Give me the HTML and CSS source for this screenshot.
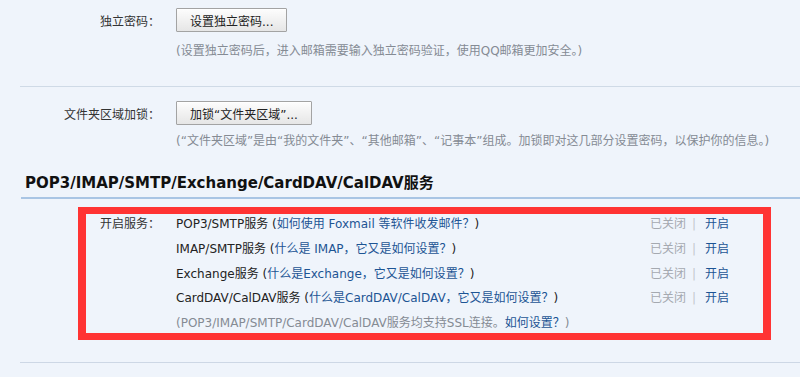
FILE: index.html
```html
<!DOCTYPE html>
<html lang="zh-CN">
<head>
<meta charset="utf-8">
<link rel="stylesheet" href="styles.css">
</head>
<body>
<div class="section s1">
  <div class="field">
    <div class="label">独立密码：</div>
    <button class="btn">设置独立密码...</button>
  </div>
  <p class="desc d1">(设置独立密码后，进入邮箱需要输入独立密码验证，使用QQ邮箱更加安全。)</p>
</div>
<div class="sep"></div>
<div class="section s2">
  <div class="field">
    <div class="label">文件夹区域加锁：</div>
    <button class="btn">加锁“文件夹区域”...</button>
  </div>
  <p class="desc d2">(“文件夹区域”是由“我的文件夹”、“其他邮箱”、“记事本”组成。加锁即对这几部分设置密码，以保护你的信息。)</p>
</div>
<h2 class="heading">POP3/IMAP/SMTP/Exchange/CardDAV/CalDAV服务</h2>
<div class="services">
  <div class="svc-label">开启服务：</div>
  <div class="svc-name">POP3/SMTP服务 (<a class="link">如何使用 Foxmail 等软件收发邮件？</a>)</div>
  <div class="status"><span class="off">已关闭</span><span class="bar">|</span><a class="link">开启</a></div>

  <div class="svc-name col2">IMAP/SMTP服务 (<a class="link">什么是 IMAP，它又是如何设置？</a>)</div>
  <div class="status"><span class="off">已关闭</span><span class="bar">|</span><a class="link">开启</a></div>

  <div class="svc-name col2">Exchange服务 (<a class="link">什么是Exchange，它又是如何设置？</a>)</div>
  <div class="status"><span class="off">已关闭</span><span class="bar">|</span><a class="link">开启</a></div>

  <div class="svc-name col2">CardDAV/CalDAV服务 (<a class="link">什么是CardDAV/CalDAV，它又是如何设置？</a>)</div>
  <div class="status"><span class="off">已关闭</span><span class="bar">|</span><a class="link">开启</a></div>

  <div class="note">(POP3/IMAP/SMTP/CardDAV/CalDAV服务均支持SSL连接。<a class="link">如何设置？</a>)</div>
</div>
<div class="sep bottom"></div>
</body>
</html>
```

FILE: styles.css
```css
html, body {
  margin: 0;
  padding: 0;
}
body {
  background: #eff4fb;
  font-family: "DejaVu Sans", "Noto Sans CJK SC", sans-serif;
  font-size: 12px;
  color: #333;
  width: 800px;
  height: 377px;
  overflow: hidden;
}
.section.s1 { padding-top: 8px; }
.section.s2 { padding-top: 14px; }
.field {
  display: flex;
  align-items: center;
  height: 24px;
}
.label {
  width: 160px;
  text-align: right;
  margin-right: 16px;
  color: #333;
  white-space: nowrap;
}
.btn {
  height: 24px;
  padding: 0 13px;
  font-family: inherit;
  font-size: 12px;
  color: #222;
  background: linear-gradient(#fdfdfd, #e6e6e6);
  border: 1px solid #a3a3a3;
  border-radius: 1px;
  box-shadow: inset 0 1px 0 #fff;
  white-space: nowrap;
}
.desc {
  margin: 0 0 0 176px;
  line-height: 18px;
  color: #858b94;
  white-space: nowrap;
}
.desc.d1 { margin-top: 10px; }
.desc.d2 { margin-top: 7px; }
.sep {
  margin: 26px 0 0 20px;
  height: 1px;
  background: #cfdae6;
}
.sep.bottom {
  margin-top: 22px;
  background: #cdd7e5;
}
.heading {
  margin: 23px 0 0 21px;
  padding: 0 0 4px 4px;
  font-size: 15px;
  line-height: 20px;
  font-weight: bold;
  color: #111;
  border-bottom: 2px solid #a9c5e4;
  white-space: nowrap;
}
.services {
  margin: 8px 29px 0 78px;
  border: 8px solid #ff3333;
  border-top-width: 7px;
  border-bottom-width: 7px;
  padding: 0 34px 0 14px;
  display: grid;
  grid-template-columns: 76px 1fr auto;
  row-gap: 4.75px;
  line-height: 20px;
  white-space: nowrap;
}
.svc-label { color: #333; }
.svc-name { color: #222; }
.col2 { grid-column: 2; }
.link {
  color: #1d5494;
  text-decoration: none;
}
.status { text-align: left; }
.off { color: #a5a9b0; }
.bar {
  color: #c3c7cc;
  margin: 0 9px 0 6px;
}
.note {
  grid-column: 2 / span 2;
  color: #858b94;
}
```
